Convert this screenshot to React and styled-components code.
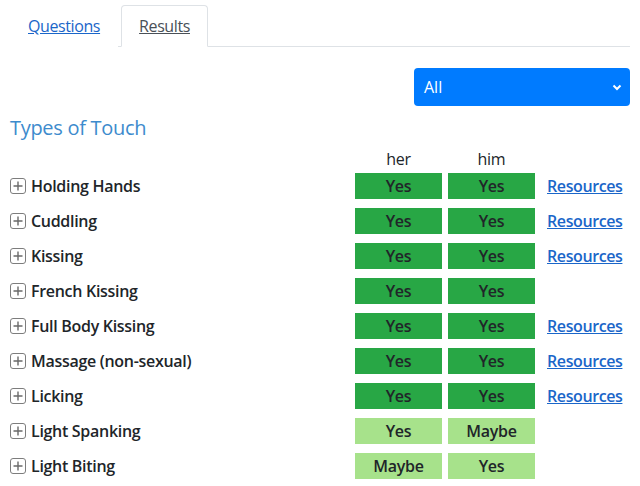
import React from "react";
import styled, { createGlobalStyle } from "styled-components";

const GlobalStyle = createGlobalStyle`
  body {
    margin: 0;
    background: #fff;
    font-family: "Open Sans", "Noto Sans", sans-serif;
    color: #212529;
  }
`;

const Page = styled.div`
  padding: 5px 10px 0;
`;

const Tabs = styled.ul`
  display: flex;
  margin: 0;
  padding: 0;
  list-style: none;
  border-bottom: 1px solid #dee2e6;
`;

const Tab = styled.li`
  margin-bottom: -1px;
  margin-right: ${props => (props.active ? "0" : "3px")};
  padding: 8px 17px;
  border: 1px solid ${props => (props.active ? "#dee2e6" : "transparent")};
  border-bottom-color: ${props => (props.active ? "#fff" : "transparent")};
  border-radius: 4px 4px 0 0;
  background: #fff;
  font-size: 16px;
  line-height: 24px;
  letter-spacing: -0.4px;
`;

const TabLink = styled.a`
  color: ${props => (props.active ? "#495057" : "#1a66c9")};
  text-decoration: underline;
`;

const FilterRow = styled.div`
  display: flex;
  justify-content: flex-end;
  margin-top: 21px;
`;

const Select = styled.div`
  display: flex;
  align-items: center;
  justify-content: space-between;
  box-sizing: border-box;
  width: 216px;
  height: 38px;
  padding: 0 8px 0 10px;
  border-radius: 4px;
  background: #007bff;
  color: #fff;
  font-size: 16px;
`;

const Heading = styled.h3`
  margin: 10px 0 0;
  color: #3d8bcd;
  font-size: 20px;
  font-weight: 400;
  line-height: 24px;
  letter-spacing: -0.3px;
`;

const Grid = styled.div`
  display: grid;
  grid-template-columns: 339px 87px 87px auto;
  column-gap: 6px;
  row-gap: 9px;
  margin-top: 9px;
  align-items: center;
`;

const ColHead = styled.div`
  text-align: center;
  font-size: 16px;
  line-height: 20px;
  margin-bottom: -5px;
  letter-spacing: -0.3px;
`;

const Label = styled.div`
  display: flex;
  align-items: center;
  gap: 5px;
  font-size: 16px;
  font-weight: 600;
  letter-spacing: -0.3px;
`;

const Expand = styled.span`
  display: inline-flex;
  align-items: center;
  justify-content: center;
  box-sizing: border-box;
  width: 16px;
  height: 16px;
  border: 1.6px solid #7d7d7d;
  border-radius: 3px;
  svg {
    display: block;
  }
`;

const Cell = styled.div`
  height: 26px;
  display: flex;
  align-items: center;
  justify-content: center;
  background: ${props => (props.strong ? "#28a745" : "#a7e28b")};
  font-size: 16px;
  font-weight: 600;
  letter-spacing: -0.3px;
  color: #212529;
`;

const Resource = styled.a`
  padding-left: 6px;
  color: #1a66c9;
  font-size: 16px;
  font-weight: 600;
  text-decoration: underline;
  letter-spacing: -0.4px;
`;

const items = [
  { name: "Holding Hands", her: "Yes", him: "Yes", link: true },
  { name: "Cuddling", her: "Yes", him: "Yes", link: true },
  { name: "Kissing", her: "Yes", him: "Yes", link: true },
  { name: "French Kissing", her: "Yes", him: "Yes", link: false },
  { name: "Full Body Kissing", her: "Yes", him: "Yes", link: true },
  { name: "Massage (non-sexual)", her: "Yes", him: "Yes", link: true },
  { name: "Licking", her: "Yes", him: "Yes", link: true },
  { name: "Light Spanking", her: "Yes", him: "Maybe", link: false },
  { name: "Light Biting", her: "Maybe", him: "Yes", link: false }
];

const PlusBox = () => (
  <Expand>
    <svg width="10" height="10" viewBox="0 0 10 10">
      <path d="M5 0.5v9M0.5 5h9" stroke="#6a6a6a" strokeWidth="1.4" />
    </svg>
  </Expand>
);

const App = () => (
  <Page>
    <GlobalStyle />
    <Tabs>
      <Tab>
        <TabLink href="#">Questions</TabLink>
      </Tab>
      <Tab active>
        <TabLink active href="#">Results</TabLink>
      </Tab>
    </Tabs>
    <FilterRow>
      <Select>
        <span>All</span>
        <svg width="10" height="8" viewBox="0 0 10 8">
          <path d="M1.5 2.5l3.5 3.5 3.5-3.5" stroke="#fff" strokeWidth="2" fill="none" />
        </svg>
      </Select>
    </FilterRow>
    <Heading>Types of Touch</Heading>
    <Grid>
      <div />
      <ColHead>her</ColHead>
      <ColHead>him</ColHead>
      <div />
      {items.map(item => {
        const strong = item.her === "Yes" && item.him === "Yes";
        return (
          <React.Fragment key={item.name}>
            <Label>
              <PlusBox />
              {item.name}
            </Label>
            <Cell strong={strong}>{item.her}</Cell>
            <Cell strong={strong}>{item.him}</Cell>
            {item.link ? <Resource href="#">Resources</Resource> : <div />}
          </React.Fragment>
        );
      })}
    </Grid>
  </Page>
);

export default App;
